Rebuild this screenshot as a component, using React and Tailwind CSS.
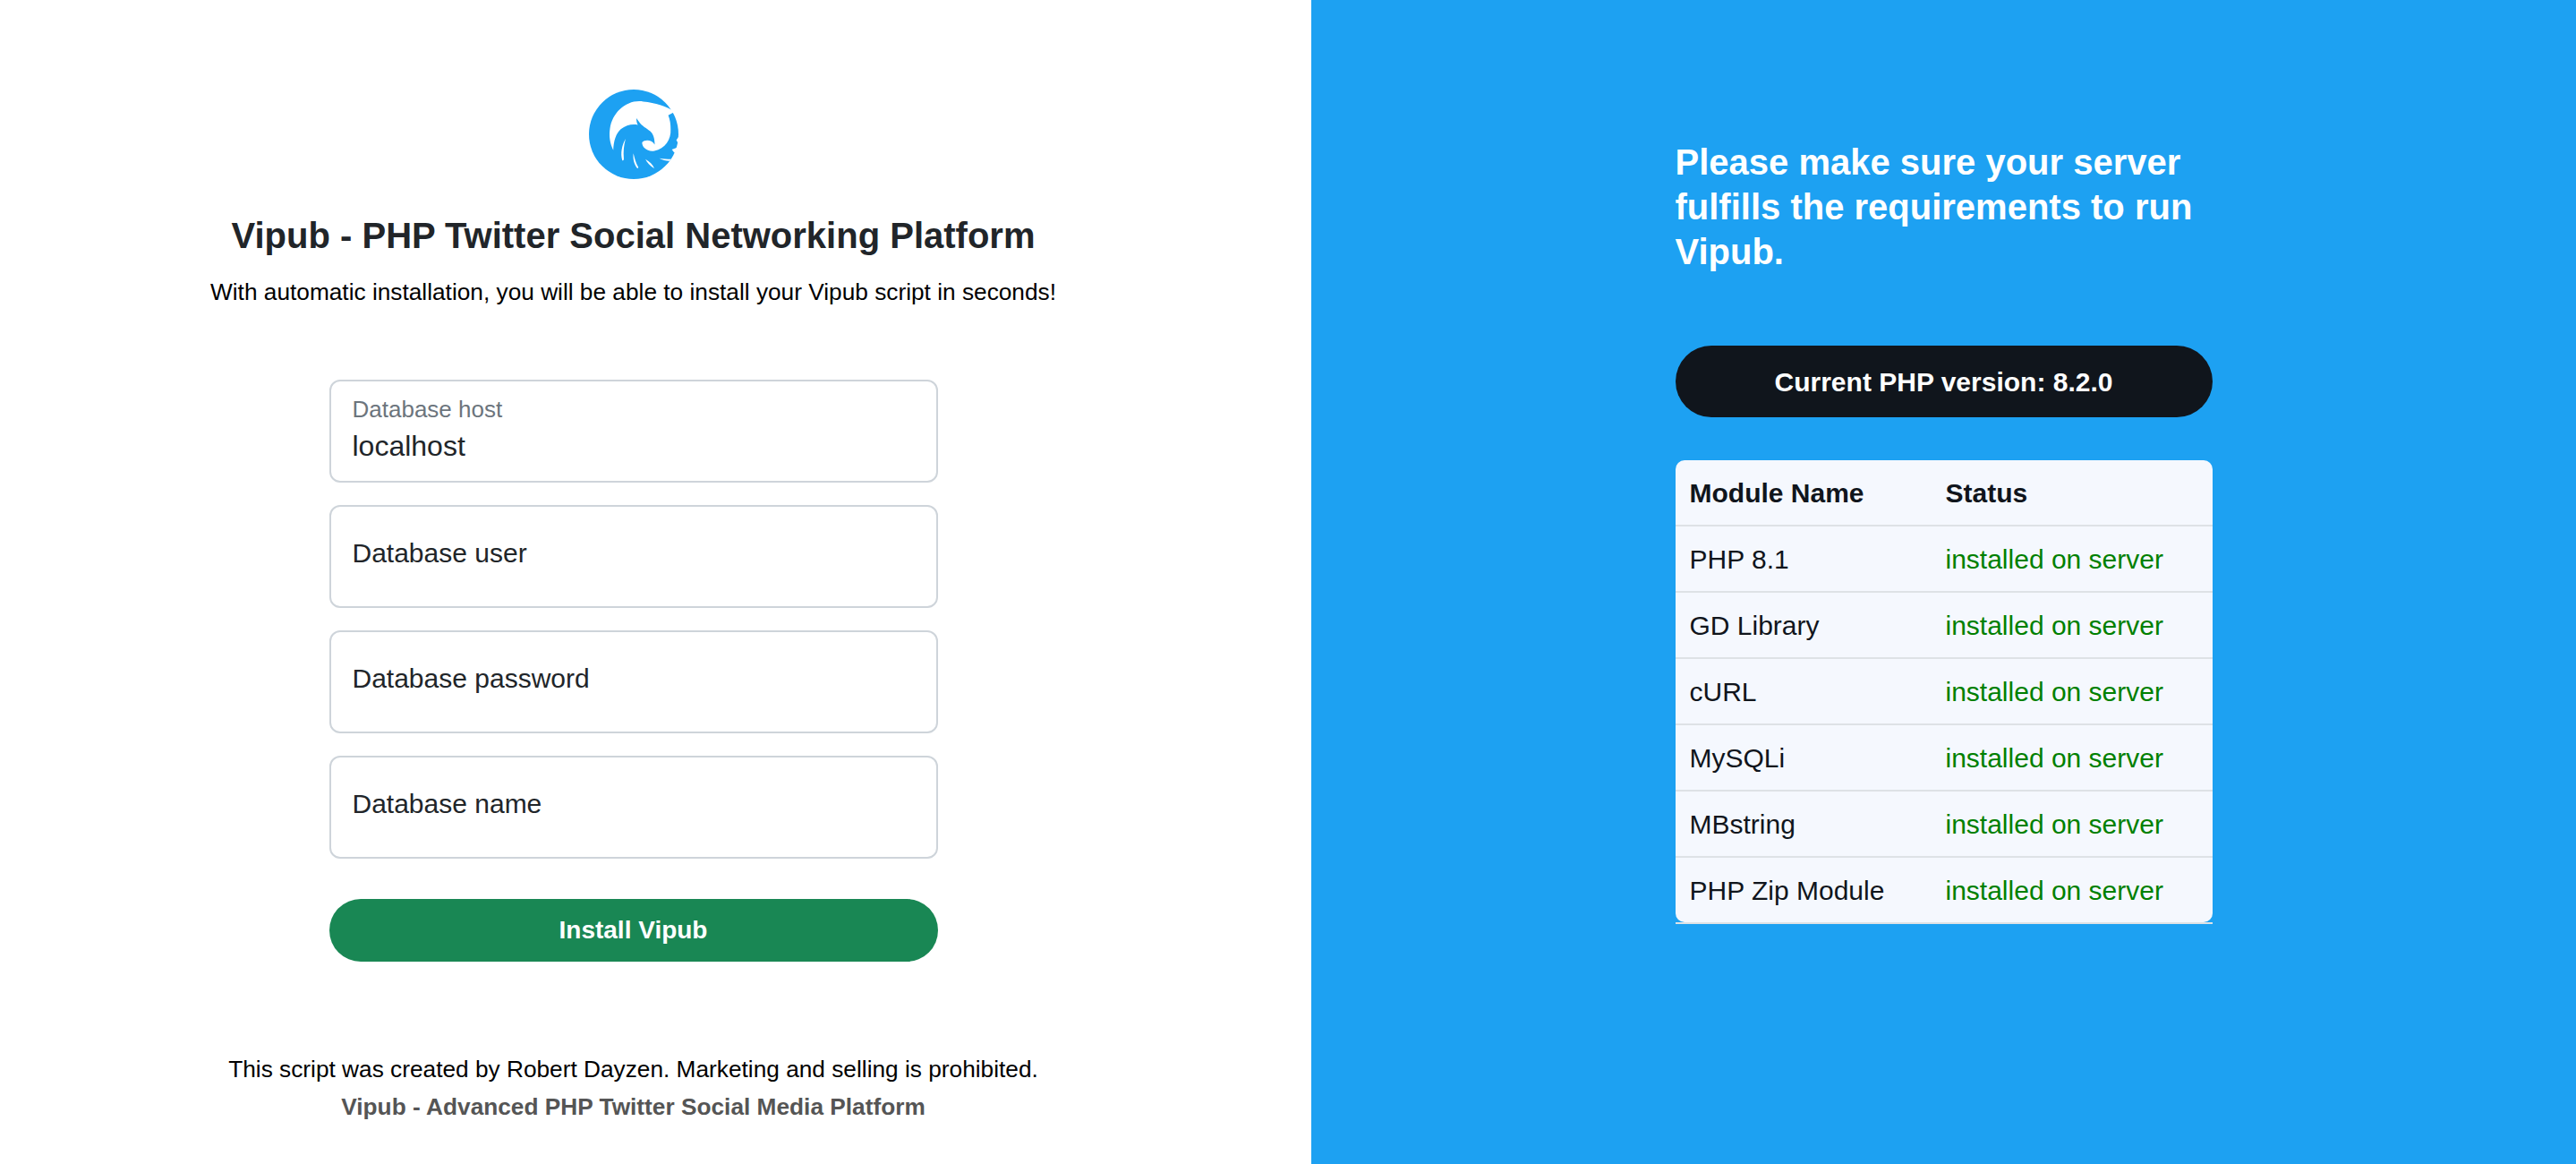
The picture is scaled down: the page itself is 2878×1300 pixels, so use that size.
const modules = ["PHP 8.1", "GD Library", "cURL", "MySQLi", "MBstring", "PHP Zip Module"];
const fields = ["Database user", "Database password", "Database name"];

function Logo({ className }) {
  return (
    <svg viewBox="114 60 298 298" className={className}>
      <circle cx="263" cy="209" r="149" fill="#1da1f2" />
      {/* inner cut with the bird's outline */}
      <path
        fill="#fff"
        d="M195 262 C184 240 180 215 184 190 C192 135 240 92 295 100 C335 104 370 114 400 134 L378 146 C384 160 386 176 386 192 C388 225 368 258 332 264 C308 268 290 252 291 236 C300 226 322 226 333 243 C333 228 330 212 322 203 C312 192 296 186 284 172 L272 155 C272 166 274 172 277 178 C258 174 238 178 220 192 C204 206 196 232 195 262 Z"
      />
      <path fill="#fff" d="M236 224 C224 245 218 272 225 296 C229 296 230 294 230 290 C228 268 230 246 236 224 Z" />
      <path fill="#fff" d="M262 272 C260 290 264 308 275 322 C278 322 279 320 278 318 C270 304 266 288 262 272 Z" />
      <path fill="#fff" d="M302 292 C308 304 318 316 332 323 C326 310 316 300 302 292 Z" />
      <path fill="#fff" d="M348 289 C358 294 370 298 382 298 L388 292 C374 292 360 291 348 289 Z" />
      <path fill="#fff" d="M414 215 L405 228 L412 240 L416 225 Z M406 254 L390 260 L398 270 L412 262 Z" />
    </svg>
  );
}

export default function App() {
  return (
    <div className="flex min-h-screen font-['Liberation_Sans',Arial,sans-serif] text-[#212529]">
      {/* Left: install form */}
      <div className="w-[1465px] shrink-0 bg-white flex flex-col items-center pt-[100px] pr-[50px]">
        <Logo className="w-[100px] h-[100px]" />
        <h1 className="mt-[38px] text-[40px] leading-[50px] font-bold">
          Vipub - PHP Twitter Social Networking Platform
        </h1>
        <p className="mt-[17px] text-[26.25px] leading-[42px] text-black">
          With automatic installation, you will be able to install your Vipub script in seconds!
        </p>

        <form className="mt-[77px] w-[680px] flex flex-col gap-[25px]">
          <div className="h-[115px] border-[2px] border-[#ced4da] rounded-[12px] px-[24px] pt-[15px] flex flex-col">
            <label className="text-[26px] leading-[32px] text-[#6c757d]">Database host</label>
            <input
              defaultValue="localhost"
              className="mt-[5px] w-full text-[32px] leading-[40px] outline-none"
            />
          </div>
          {fields.map((name) => (
            <div key={name} className="h-[115px] border-[2px] border-[#ced4da] rounded-[12px] px-[24px] pb-[8px] flex items-center">
              <input
                placeholder={name}
                className="w-full text-[30px] outline-none placeholder:text-[#212529]"
              />
            </div>
          ))}
          <button
            type="button"
            className="mt-[20px] h-[70px] rounded-full bg-[#198754] text-white text-[28px] font-bold"
          >
            Install Vipub
          </button>
        </form>

        <p className="mt-[99px] text-[26.25px] leading-[42px] text-black">
          This script was created by Robert Dayzen. Marketing and selling is prohibited.
        </p>
        <p className="text-[26.25px] leading-[42px] font-bold text-[#555]">
          Vipub - Advanced PHP Twitter Social Media Platform
        </p>
      </div>

      {/* Right: server requirements */}
      <div className="flex-1 bg-[#1da1f2] flex justify-center pt-[156px]">
        <div className="w-[600px]">
          <h2 className="text-[40px] leading-[50px] font-bold text-white">
            Please make sure your server fulfills the requirements to run Vipub.
          </h2>
          <div className="mt-[80px] h-[80px] rounded-full bg-[#10151c] flex items-center justify-center text-white text-[30px] font-bold">
            Current PHP version: 8.2.0
          </div>

          <div className="mt-[48px] rounded-[10px] bg-[#f5f8fe] text-[#10151c] text-[30px]">
            <div className="grid grid-cols-[286px_1fr] h-[74px] items-center border-b-[2px] border-[#dee2e6] px-[16px] font-bold">
              <span>Module Name</span>
              <span>Status</span>
            </div>
            {modules.map((m, i) => (
              <div
                key={m}
                className={
                  i < modules.length - 1
                    ? "grid grid-cols-[286px_1fr] h-[74px] items-center border-b-[2px] border-[#dee2e6] px-[16px]"
                    : "grid grid-cols-[286px_1fr] h-[72px] items-center px-[16px]"
                }
              >
                <span>{m}</span>
                <span className="text-[#008000]">installed on server</span>
              </div>
            ))}
          </div>
          <div className="h-[2px] bg-[#dee2e6]" />
        </div>
      </div>
    </div>
  );
}
